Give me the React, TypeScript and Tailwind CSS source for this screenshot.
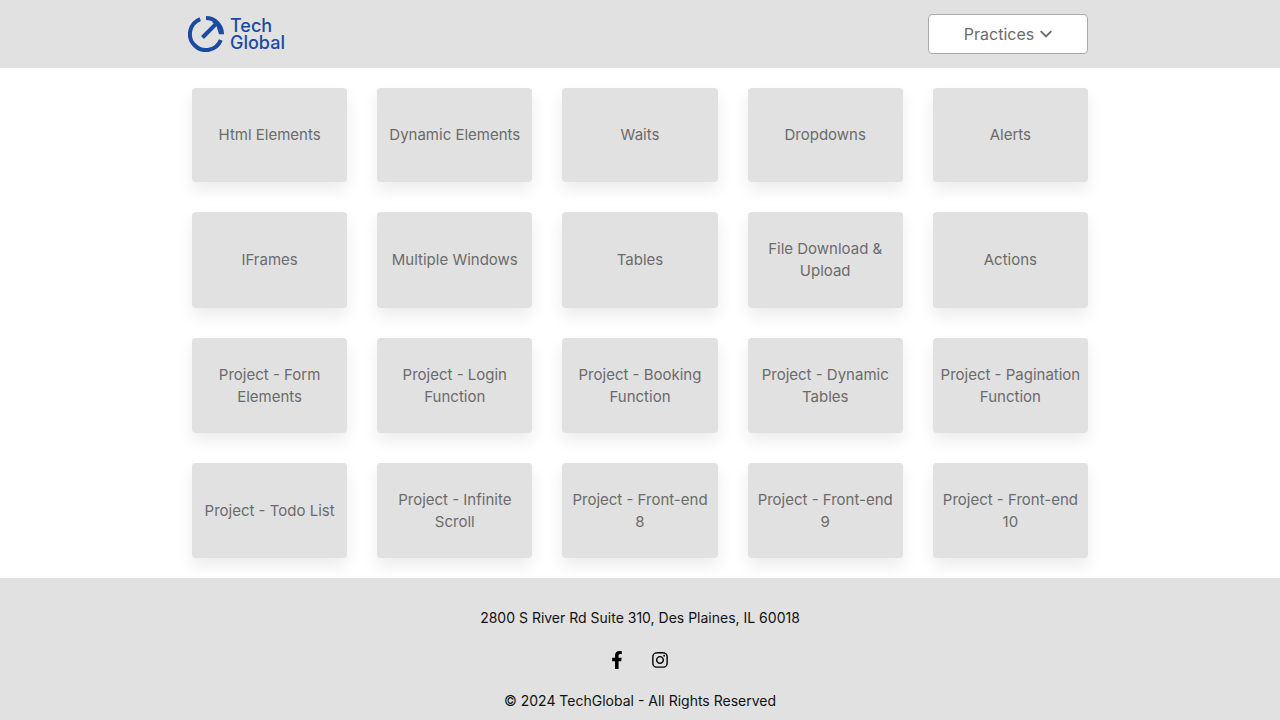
import { FaFacebookF, FaInstagram } from "react-icons/fa";

const practices: string[] = [
  "Html Elements",
  "Dynamic Elements",
  "Waits",
  "Dropdowns",
  "Alerts",
  "IFrames",
  "Multiple Windows",
  "Tables",
  "File Download &\nUpload",
  "Actions",
  "Project - Form\nElements",
  "Project - Login\nFunction",
  "Project - Booking\nFunction",
  "Project - Dynamic\nTables",
  "Project - Pagination\nFunction",
  "Project - Todo List",
  "Project - Infinite\nScroll",
  "Project - Front-end\n8",
  "Project - Front-end\n9",
  "Project - Front-end\n10",
];

function Logo() {
  return (
    <a href="#home" className="-ml-1 flex items-center gap-1.5 text-[#1a4ba0]">
      <svg viewBox="0 0 36 36" className="size-9" fill="none" stroke="currentColor" strokeWidth="4" aria-hidden="true">
        <path d="M18 2A16 16 0 0 1 34 18.3" />
        <path d="M32.8 24A16 16 0 1 1 12.2 3.1" />
        <path d="M14.5 21.5L29.3 6.7" />
        <path d="M26 5L31 10L32.5 18.3H31L28.5 10L24 6Z" fill="currentColor" stroke="none" />
      </svg>
      <span className="text-lg leading-[17px] font-medium">
        Tech
        <br />
        Global
      </span>
    </a>
  );
}

function Header() {
  return (
    <header className="bg-[#e1e1e1]">
      <div className="mx-auto flex h-17 w-[70%] items-center justify-between">
        <Logo />
        <button
          type="button"
          className="flex h-10 w-40 items-center justify-center gap-1.5 rounded border border-[#aaaaaa] bg-white text-base text-[#6b6b6b]"
        >
          Practices
          <svg viewBox="0 0 12 8" className="h-2 w-3" fill="none" stroke="currentColor" strokeWidth="1.9" aria-hidden="true">
            <path d="M0.7 1.2L6 6.5L11.3 1.2" />
          </svg>
        </button>
      </div>
    </header>
  );
}

export default function App() {
  return (
    <div className="flex min-h-screen flex-col bg-white font-['Inter',sans-serif]">
      <Header />
      <main className="mx-auto grid w-[70%] grid-cols-5 grid-rows-[94px_96px_95px_95px] gap-[30px] py-5">
        {practices.map((name) => (
          <a
            key={name}
            href="#practice"
            className="flex items-center justify-center rounded bg-[#e1e1e1] text-center text-[15px] leading-[22px] whitespace-pre-line text-[#6b6b6b] shadow-[0_8px_16px_rgba(0,0,0,0.08)]"
          >
            {name}
          </a>
        ))}
      </main>
      <footer className="flex flex-1 flex-col items-center gap-5 bg-[#e1e1e1] pt-[29px] pb-2 text-sm leading-[22px] text-[#111111]">
        <p>2800 S River Rd Suite 310, Des Plaines, IL 60018</p>
        <div className="flex h-[21px] items-center gap-[25px] pr-1 text-black">
          <a href="#facebook" aria-label="Facebook">
            <FaFacebookF className="size-[18px]" />
          </a>
          <a href="#instagram" aria-label="Instagram">
            <FaInstagram className="size-[18px]" />
          </a>
        </div>
        <p>© 2024 TechGlobal - All Rights Reserved</p>
      </footer>
    </div>
  );
}
